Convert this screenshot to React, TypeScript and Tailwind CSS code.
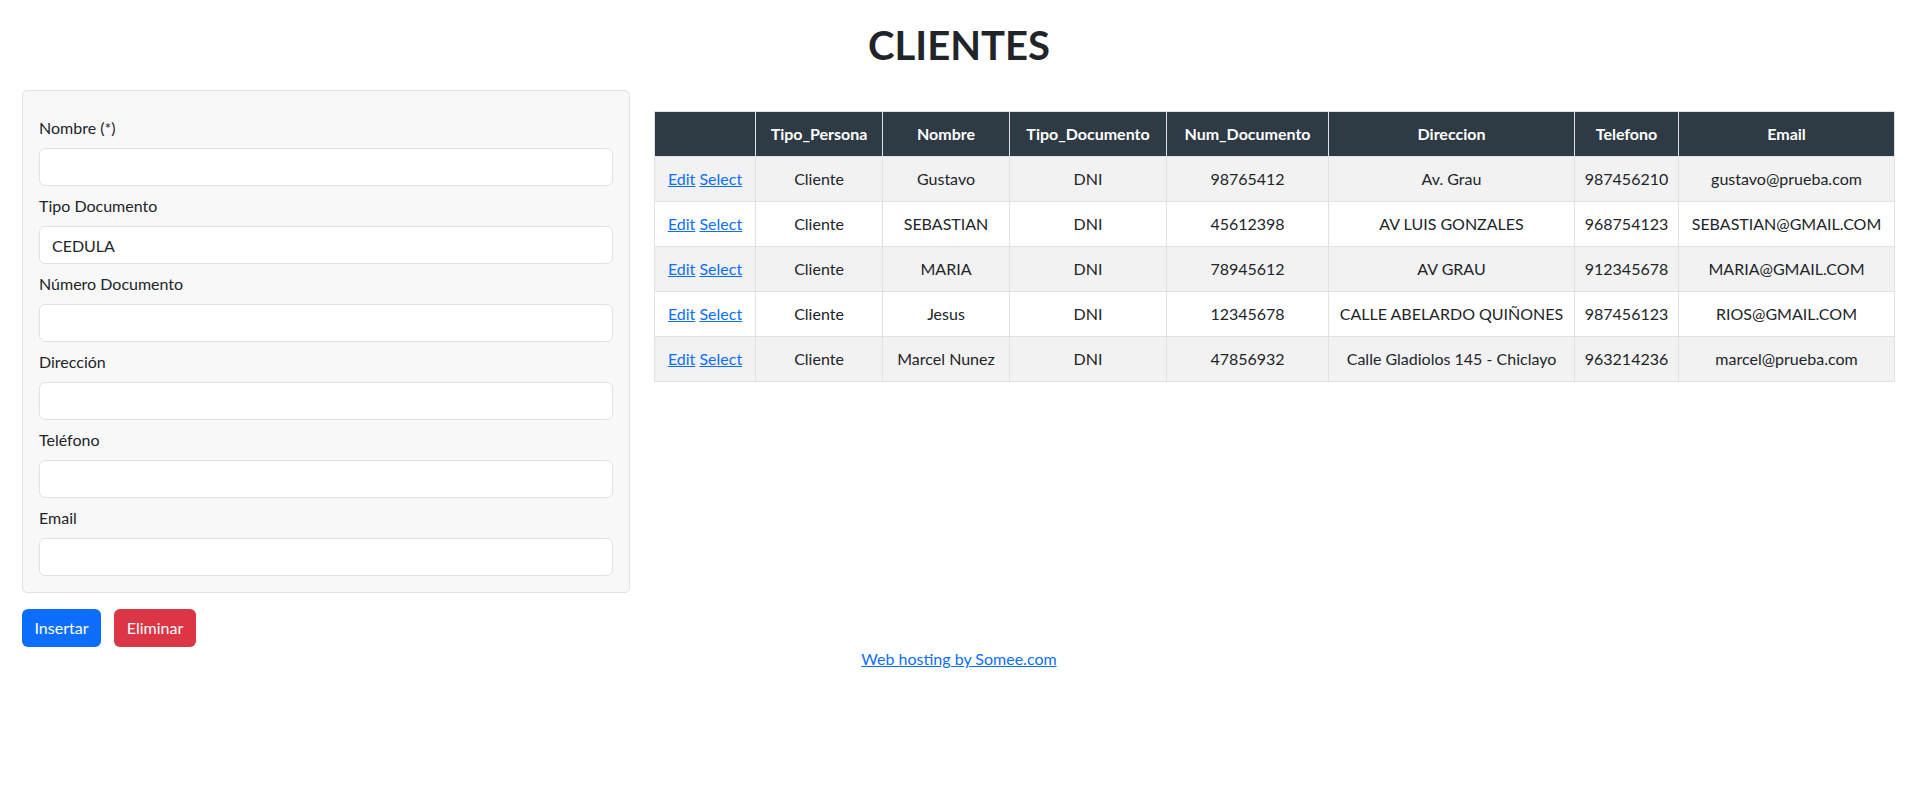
import React from 'react';

interface Cliente {
  tipoPersona: string;
  nombre: string;
  tipoDocumento: string;
  numDocumento: string;
  direccion: string;
  telefono: string;
  email: string;
}

const clientes: Cliente[] = [
  { tipoPersona: 'Cliente', nombre: 'Gustavo', tipoDocumento: 'DNI', numDocumento: '98765412', direccion: 'Av. Grau', telefono: '987456210', email: 'gustavo@prueba.com' },
  { tipoPersona: 'Cliente', nombre: 'SEBASTIAN', tipoDocumento: 'DNI', numDocumento: '45612398', direccion: 'AV LUIS GONZALES', telefono: '968754123', email: 'SEBASTIAN@GMAIL.COM' },
  { tipoPersona: 'Cliente', nombre: 'MARIA', tipoDocumento: 'DNI', numDocumento: '78945612', direccion: 'AV GRAU', telefono: '912345678', email: 'MARIA@GMAIL.COM' },
  { tipoPersona: 'Cliente', nombre: 'Jesus', tipoDocumento: 'DNI', numDocumento: '12345678', direccion: 'CALLE ABELARDO QUIÑONES', telefono: '987456123', email: 'RIOS@GMAIL.COM' },
  { tipoPersona: 'Cliente', nombre: 'Marcel Nunez', tipoDocumento: 'DNI', numDocumento: '47856932', direccion: 'Calle Gladiolos 145 - Chiclayo', telefono: '963214236', email: 'marcel@prueba.com' },
];

const campos = [
  { label: 'Nombre (*)', value: '' },
  { label: 'Tipo Documento', value: 'CEDULA' },
  { label: 'Número Documento', value: '' },
  { label: 'Dirección', value: '' },
  { label: 'Teléfono', value: '' },
  { label: 'Email', value: '' },
];

const headers = ['', 'Tipo_Persona', 'Nombre', 'Tipo_Documento', 'Num_Documento', 'Direccion', 'Telefono', 'Email'];
const widths = [101, 127, 127, 157, 162, 246, 104, 216];

export default function App() {
  return (
    <div className="min-h-screen bg-white text-[#212529] text-base" style={{ fontFamily: '"Segoe UI", Lato, "Liberation Sans", sans-serif' }}>
      <h1 className="pt-5 text-center text-[40px] font-bold leading-[50px]">CLIENTES</h1>

      <div className="mt-5 flex gap-6 pl-[22px] pr-6">
        <div className="w-[608px] shrink-0">
          <div className="rounded-[5px] border border-[#dee2e6] bg-[#f8f8f8] px-4 pt-[25px] pb-4">
            {campos.map((c, i) => (
              <div key={c.label}>
                <label className="mb-2 block leading-6">{c.label}</label>
                <input
                  readOnly
                  value={c.value}
                  className={`block h-[38px] w-full rounded-md border border-[#dee2e6] bg-white px-3 leading-6 text-[#212529] outline-none ${i < campos.length - 1 ? 'mb-2' : ''}`}
                />
              </div>
            ))}
          </div>
          <div className="mt-4 flex gap-[13px]">
            <button className="h-[38px] w-[79px] rounded-md bg-[#0d6efd] leading-6 text-white">Insertar</button>
            <button className="h-[38px] w-[82px] rounded-md bg-[#dc3545] leading-6 text-white">Eliminar</button>
          </div>
        </div>

        <div className="min-w-0 flex-1 pt-[21px]">
          <table className="w-full table-fixed border-collapse">
            <colgroup>
              {widths.map((w, i) => (
                <col key={i} style={{ width: w }} />
              ))}
            </colgroup>
            <thead>
              <tr className="bg-[#2e3a44] text-white">
                {headers.map((h, i) => (
                  <th key={i} className="border border-[#dee2e6] px-2 py-[10px] text-center font-bold leading-6">{h}</th>
                ))}
              </tr>
            </thead>
            <tbody>
              {clientes.map((c, i) => (
                <tr key={c.numDocumento} className={i % 2 === 0 ? 'bg-[#f2f2f2]' : 'bg-white'}>
                  <td className="border border-[#dee2e6] px-2 py-[10px] text-center leading-6 whitespace-nowrap">
                    <a href="#" className="text-[#0d6efd] underline">Edit</a>{' '}
                    <a href="#" className="text-[#0d6efd] underline">Select</a>
                  </td>
                  <td className="border border-[#dee2e6] px-2 py-[10px] text-center leading-6">{c.tipoPersona}</td>
                  <td className="border border-[#dee2e6] px-2 py-[10px] text-center leading-6">{c.nombre}</td>
                  <td className="border border-[#dee2e6] px-2 py-[10px] text-center leading-6">{c.tipoDocumento}</td>
                  <td className="border border-[#dee2e6] px-2 py-[10px] text-center leading-6">{c.numDocumento}</td>
                  <td className="border border-[#dee2e6] px-2 py-[10px] text-center leading-6 whitespace-nowrap">{c.direccion}</td>
                  <td className="border border-[#dee2e6] px-2 py-[10px] text-center leading-6">{c.telefono}</td>
                  <td className="border border-[#dee2e6] px-2 py-[10px] text-center leading-6 whitespace-nowrap">{c.email}</td>
                </tr>
              ))}
            </tbody>
          </table>
        </div>
      </div>

      <div className="text-center leading-6">
        <a href="#" className="text-[#0d6efd] underline">Web hosting by Somee.com</a>
      </div>
    </div>
  );
}
